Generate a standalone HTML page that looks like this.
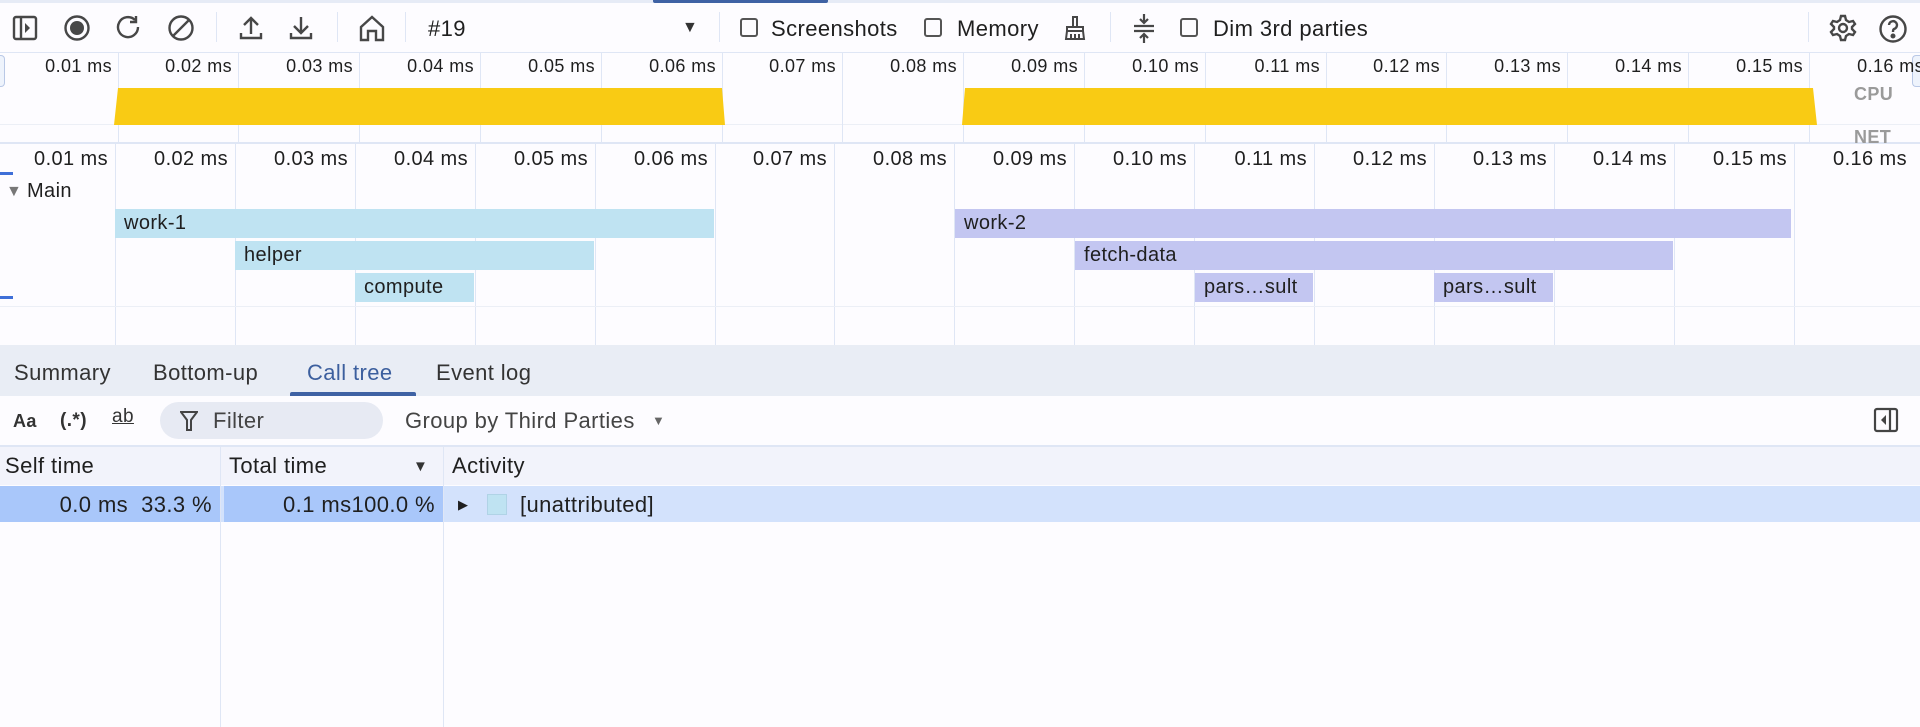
<!DOCTYPE html>
<html><head><meta charset="utf-8"><style>
*{margin:0;padding:0;box-sizing:border-box}
body{width:1920px;height:727px;overflow:hidden;background:#fdfcff;font-family:"Liberation Sans",sans-serif;color:#1f1f1f;position:relative;letter-spacing:0.4px}
.a{position:absolute}
.t{position:absolute;white-space:nowrap}
.vl{position:absolute;width:1px;background:#dfe6f5}
.bar{position:absolute;height:29px;font-size:20px;line-height:29px;padding-left:9px;color:#1f1f1f;overflow:hidden;white-space:nowrap}
.c1{background:#bfe3f2}
.c2{background:#c3c6f1}
.ic{position:absolute;top:14px}
</style></head><body>
<!-- toolbar -->
<div class="a" style="left:0;top:0;width:1920px;height:3px;background:#e6ebf6"></div>
<div class="a" style="left:653px;top:0;width:175px;height:3px;background:#3f62a4;border-radius:0 0 2px 2px"></div>
<svg class="ic" style="left:12px" width="26" height="28" viewBox="0 0 26 28" fill="none" stroke="#474747" stroke-width="2.4"><rect x="2" y="3" width="22" height="22" rx="2"/><line x1="9" y1="3" x2="9" y2="25"/><path d="M13 9l5 5-5 5z" fill="#474747" stroke="none"/></svg>
<svg class="ic" style="left:63px" width="28" height="28" viewBox="0 0 28 28"><circle cx="14" cy="14" r="11.5" fill="none" stroke="#474747" stroke-width="2.4"/><circle cx="14" cy="14" r="7" fill="#474747"/></svg>
<svg class="ic" style="left:115px" width="28" height="28" viewBox="0 0 28 28" fill="none" stroke="#474747" stroke-width="2.4"><path d="M23 13a10 10 0 1 1-3-7"/><path d="M21 2v6h-6"/></svg>
<svg class="ic" style="left:167px" width="28" height="28" viewBox="0 0 28 28" fill="none" stroke="#474747" stroke-width="2.4"><circle cx="14" cy="14" r="11.5"/><line x1="6" y1="22" x2="22" y2="6"/></svg>
<div class="vl" style="left:216px;top:12px;height:30px"></div>
<svg class="ic" style="left:238px" width="26" height="28" viewBox="0 0 26 28" fill="none" stroke="#474747" stroke-width="2.4"><path d="M13 20V4M6 11l7-7 7 7M3 19v5h20v-5"/></svg>
<svg class="ic" style="left:288px" width="26" height="28" viewBox="0 0 26 28" fill="none" stroke="#474747" stroke-width="2.4"><path d="M13 3v16M6 12l7 7 7-7M3 19v5h20v-5"/></svg>
<div class="vl" style="left:337px;top:12px;height:30px"></div>
<svg class="ic" style="left:358px" width="28" height="28" viewBox="0 0 28 28" fill="none" stroke="#474747" stroke-width="2.4"><path d="M3 13L14 3l11 10v13h-7v-9h-8v9H3z"/></svg>
<div class="vl" style="left:405px;top:12px;height:30px"></div>
<div class="t" style="left:428px;top:16px;font-size:22px">#19</div>
<div class="t" style="left:682px;top:19px;font-size:16px;color:#333">▼</div>
<div class="vl" style="left:719px;top:12px;height:30px"></div>
<div class="a" style="left:740px;top:18px;width:18px;height:19px;border:2px solid #555;border-radius:3px"></div>
<div class="t" style="left:771px;top:16px;font-size:22px">Screenshots</div>
<div class="a" style="left:924px;top:18px;width:18px;height:19px;border:2px solid #555;border-radius:3px"></div>
<div class="t" style="left:957px;top:16px;font-size:22px">Memory</div>
<svg class="ic" style="left:1062px" width="26" height="28" viewBox="0 0 26 28" fill="none" stroke="#474747" stroke-width="2"><path d="M11 3h4v10h-4zM5 13h16v4H5zM5 17l-1 8h18l-1-8M9 25v-5M13 25v-5M17 25v-5"/></svg>
<div class="vl" style="left:1110px;top:12px;height:30px"></div>
<svg class="ic" style="left:1131px" width="26" height="30" viewBox="0 0 26 30" fill="none" stroke="#474747" stroke-width="2.2"><path d="M13 0v9M9 5l4 4 4-4M3 12h20M3 17h20M13 29v-9M9 24l4-4 4 4"/></svg>
<div class="a" style="left:1180px;top:18px;width:18px;height:19px;border:2px solid #555;border-radius:3px"></div>
<div class="t" style="left:1213px;top:16px;font-size:22px">Dim 3rd parties</div>
<div class="vl" style="left:1808px;top:12px;height:30px"></div>
<svg class="ic" style="left:1829px" width="28" height="28" viewBox="0 0 28 28" fill="none" stroke="#474747" stroke-width="2.4"><circle cx="14" cy="14" r="4"/><path d="M12 2h4l1 4 3 2 4-1 2 3-3 3v2l3 3-2 3-4-1-3 2-1 4h-4l-1-4-3-2-4 1-2-3 3-3v-2L2 10l2-3 4 1 3-2z"/></svg>
<svg class="ic" style="left:1878px" width="30" height="30" viewBox="0 0 30 30" fill="none" stroke="#474747" stroke-width="2.4"><circle cx="15" cy="15" r="12.5"/><path d="M11 11a4 4 0 1 1 5 4c-1 .5-1 1.5-1 3"/><circle cx="15" cy="22" r="1.3" fill="#474747"/></svg>
<!-- overview -->
<div class="a" style="left:0;top:52px;width:1920px;height:92px;border-top:1px solid #dfe6f5;border-bottom:2px solid #dfe6f5"></div>
<div class="a" style="left:0;top:124px;width:1920px;height:1px;background:#eceff6"></div>
<div class="a" style="left:0;top:55px;width:5px;height:32px;border:1px solid #b9c8e6;border-left:none;border-radius:0 4px 4px 0;background:#eef3fc"></div>
<div class="a" style="left:1912px;top:55px;width:8px;height:32px;border:1px solid #b9c8e6;border-right:none;border-radius:4px 0 0 4px;background:#eef3fc"></div>
<div id="ov"></div>
<svg class="a" style="left:0;top:85px" width="1920" height="42"><path d="M114 40L118 3H722L725 40Z" fill="#f9cb14"/><path d="M962 40L965 3H1813L1817 40Z" fill="#f9cb14"/></svg>
<div class="t" style="left:1854px;top:84px;font-size:18px;font-weight:bold;color:#9a9a9a">CPU</div>
<div class="t" style="left:1854px;top:127px;font-size:18px;font-weight:bold;color:#9a9a9a">NET</div>
<!-- main timeline -->
<div class="a" style="left:0;top:172px;width:13px;height:3px;background:#3f6fd8"></div>
<div class="a" style="left:0;top:296px;width:13px;height:3px;background:#3f6fd8"></div>
<div id="mt"></div>
<div class="a" style="left:0;top:306px;width:1920px;height:1px;background:#eceff6"></div>
<div class="t" style="left:6px;top:183px;font-size:16px;color:#777">▼</div>
<div class="t" style="left:27px;top:180px;font-size:20px">Main</div>
<div class="bar c1" style="left:115px;top:209px;width:599px">work-1</div>
<div class="bar c1" style="left:235px;top:241px;width:359px">helper</div>
<div class="bar c1" style="left:355px;top:273px;width:119px">compute</div>
<div class="bar c2" style="left:955px;top:209px;width:836px">work-2</div>
<div class="bar c2" style="left:1075px;top:241px;width:598px">fetch-data</div>
<div class="bar c2" style="left:1195px;top:273px;width:118px">pars…sult</div>
<div class="bar c2" style="left:1434px;top:273px;width:119px">pars…sult</div>
<!-- tabs -->
<div class="a" style="left:0;top:345px;width:1920px;height:51px;background:#e9edf5"></div>
<div class="t" style="left:14px;top:360px;font-size:22px;color:#333">Summary</div>
<div class="t" style="left:153px;top:360px;font-size:22px;color:#333">Bottom-up</div>
<div class="t" style="left:307px;top:360px;font-size:22px;color:#3c5f9e">Call tree</div>
<div class="t" style="left:436px;top:360px;font-size:22px;color:#333">Event log</div>
<div class="a" style="left:290px;top:392px;width:126px;height:4px;background:#3f62a4;border-radius:2px 2px 0 0"></div>
<!-- filter row -->
<div class="t" style="left:13px;top:411px;font-size:18px;font-weight:bold;color:#333">Aa</div>
<div class="t" style="left:60px;top:410px;font-size:19px;font-weight:bold;color:#333">(.*)</div>
<div class="t" style="left:112px;top:406px;font-size:19px;color:#333;text-decoration:underline">ab</div>
<div class="a" style="left:160px;top:402px;width:223px;height:37px;background:#e7eaf3;border-radius:19px"></div>
<svg class="a" style="left:180px;top:410px" width="18" height="22" viewBox="0 0 18 22" fill="none" stroke="#444" stroke-width="2"><path d="M1 2h16l-6 8v10h-4V10z"/></svg>
<div class="t" style="left:213px;top:408px;font-size:22px;color:#444">Filter</div>
<div class="t" style="left:405px;top:408px;font-size:22px;color:#444">Group by Third Parties</div>
<div class="t" style="left:652px;top:413px;font-size:13px;color:#666">▼</div>
<svg class="a" style="left:1873px;top:406px" width="26" height="28" viewBox="0 0 26 28" fill="none" stroke="#444" stroke-width="2.2"><rect x="2" y="3" width="22" height="22" rx="2"/><line x1="17" y1="3" x2="17" y2="25"/><path d="M13 9l-5 5 5 5z" fill="#444" stroke="none"/></svg>
<!-- table -->
<div class="a" style="left:0;top:445px;width:1920px;height:2px;background:#dfe6f5"></div>
<div class="a" style="left:0;top:447px;width:1920px;height:38px;background:#f2f3fb"></div>
<div class="a" style="left:0;top:486px;width:1920px;height:36px;background:#d3e2fc"></div>
<div class="a" style="left:0;top:486px;width:220px;height:36px;background:#a9c7fa"></div>
<div class="a" style="left:224px;top:486px;width:219px;height:36px;background:#a9c7fa"></div>
<div class="vl" style="left:220px;top:447px;height:280px"></div>
<div class="vl" style="left:443px;top:447px;height:280px"></div>
<div class="t" style="left:5px;top:453px;font-size:22px">Self time</div>
<div class="t" style="left:229px;top:453px;font-size:22px">Total time</div>
<div class="t" style="left:413px;top:458px;font-size:15px;color:#333">▼</div>
<div class="t" style="left:452px;top:453px;font-size:22px">Activity</div>
<div class="t" style="left:0;top:492px;width:212px;text-align:right;font-size:22px">0.0 ms&nbsp; 33.3 %</div>
<div class="t" style="left:224px;top:492px;width:211px;text-align:right;font-size:22px">0.1 ms100.0 %</div>
<div class="t" style="left:458px;top:497px;font-size:13px">▶</div>
<div class="a" style="left:487px;top:494px;width:20px;height:21px;background:#bfe3f2;border:1px solid #b0d3e6"></div>
<div class="t" style="left:520px;top:492px;font-size:22px">[unattributed]</div>
<script>
var ov=document.getElementById('ov'),h='';
for(var i=0;i<16;i++){var x=117.5+i*120.8;
 if(i<15)h+='<div class="vl" style="left:'+Math.round(x)+'px;top:53px;height:90px"></div>';
 h+='<div class="t" style="left:'+Math.round(x-86)+'px;top:56px;width:80px;text-align:right;font-size:18px">0.'+(i<9?'0':'')+(i+1)+' ms</div>';}
ov.innerHTML=h;
var mt=document.getElementById('mt');h='';
for(var i=0;i<16;i++){var x=115+i*119.9;
 if(i<15)h+='<div class="vl" style="left:'+Math.round(x)+'px;top:144px;height:201px"></div>';
 h+='<div class="t" style="left:'+Math.round(x-100)+'px;top:148px;width:93px;text-align:right;font-size:20px">0.'+(i<9?'0':'')+(i+1)+' ms</div>';}
mt.innerHTML=h;
</script>
</body></html>
